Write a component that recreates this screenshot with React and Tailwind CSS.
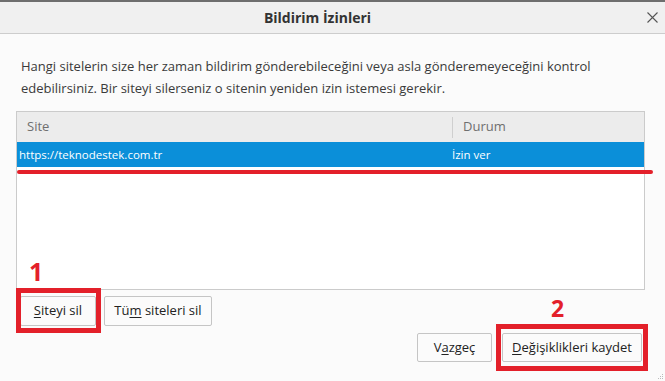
import React from "react";

export default function App() {
  const font = { fontFamily: '"Open Sans", "Noto Sans", sans-serif' };
  return (
    <div
      className="relative w-[665px] h-[381px] overflow-hidden bg-[#fbfbfb] text-[13px] text-[#333]"
      style={font}
    >
      <div className="h-[2px] bg-[#6e6e6e]" />
      <div className="flex h-[32px] items-center border-b border-[#cdcdcd] bg-[#f0f0f0]">
        <div className="flex flex-1 justify-center text-[14px] font-bold text-[#333]">
          Bildirim İzinleri
        </div>
        <div className="flex w-[30px] items-center justify-start pl-[12px]">
          <svg width="11" height="11" viewBox="0 0 11 11">
            <path d="M0.5 0.5 L10.5 10.5 M10.5 0.5 L0.5 10.5" stroke="#555" strokeWidth="1.1" />
          </svg>
        </div>
      </div>

      <div className="pl-[21px] pt-[21px] pr-[40px] leading-[22px] text-[#3a3a3a]">
        <div>Hangi sitelerin size her zaman bildirim gönderebileceğini veya asla gönderemeyeceğini kontrol</div>
        <div>edebilirsiniz. Bir siteyi silerseniz o sitenin yeniden izin istemesi gerekir.</div>
      </div>

      <div className="ml-[16px] mt-[12px] h-[179px] w-[629px] border border-[#cbcbcb] bg-white">
        <div className="flex h-[30px] bg-[#ececec] text-[#6f6f6f]">
          <div className="flex w-[433px] items-center pl-[10px]">Site</div>
          <div className="flex flex-1 items-center pl-[2px]">
            <div className="flex h-[21px] items-center border-l border-[#cfcfcf] pl-[10px]">Durum</div>
          </div>
        </div>
        <div className="flex h-[25px] items-center bg-[#0b8fd9] text-[11.5px] text-white">
          <div className="w-[433px] pl-[2px]">https://teknodestek.com.tr</div>
          <div className="flex-1 pl-[2px]">İzin ver</div>
        </div>
      </div>

      <div className="mt-[6px] flex gap-[8px] pl-[20px]">
        <button className="h-[30px] w-[76px] rounded-[2px] border border-[#c5c5c5] bg-[#fbfbfb] text-[#222]">
          <u className="underline-offset-2">S</u>iteyi sil
        </button>
        <button className="h-[30px] w-[108px] rounded-[2px] border border-[#c5c5c5] bg-[#fbfbfb] text-[#222]">
          Tü<u className="underline-offset-2">m</u> siteleri sil
        </button>
      </div>

      <div className="mt-[7px] flex justify-end gap-[10px] pr-[23px]">
        <button className="h-[29px] w-[75px] rounded-[2px] border border-[#c5c5c5] bg-[#fbfbfb] text-[#222]">
          V<u className="underline-offset-2">a</u>zgeç
        </button>
        <button className="h-[29px] w-[140px] rounded-[2px] border border-[#c5c5c5] bg-[#fbfbfb] text-[#222]">
          <u className="underline-offset-2">D</u>eğişiklikleri kaydet
        </button>
      </div>

      {/* annotations */}
      <div className="absolute left-[17px] top-[170px] h-[4px] w-[636px] rounded-full bg-[#e3202a]" />
      <div className="absolute left-[16px] top-[288px] h-[45px] w-[85px] border-[5px] border-[#e3202a]" />
      <div className="absolute left-[496px] top-[324px] h-[47px] w-[152px] border-[5px] border-[#e3202a]" />
      <div
        className="absolute left-[29px] top-[254px] text-[25px] font-bold leading-[34px] text-[#e3202a]"
        style={{ fontFamily: '"Open Sans", sans-serif' }}
      >
        1
      </div>
      <div
        className="absolute left-[551px] top-[292px] text-[23px] font-bold leading-[32px] text-[#e3202a]"
        style={{ fontFamily: '"Open Sans", sans-serif' }}
      >
        2
      </div>

      {/* resize grip */}
      <svg className="absolute right-[1px] bottom-[1px]" width="6" height="6" viewBox="0 0 6 6">
        <rect x="4" y="0" width="1" height="1" fill="#bbb" />
        <rect x="2" y="2" width="1" height="1" fill="#bbb" />
        <rect x="4" y="2" width="1" height="1" fill="#bbb" />
        <rect x="0" y="4" width="1" height="1" fill="#bbb" />
        <rect x="2" y="4" width="1" height="1" fill="#bbb" />
        <rect x="4" y="4" width="1" height="1" fill="#bbb" />
      </svg>
    </div>
  );
}
